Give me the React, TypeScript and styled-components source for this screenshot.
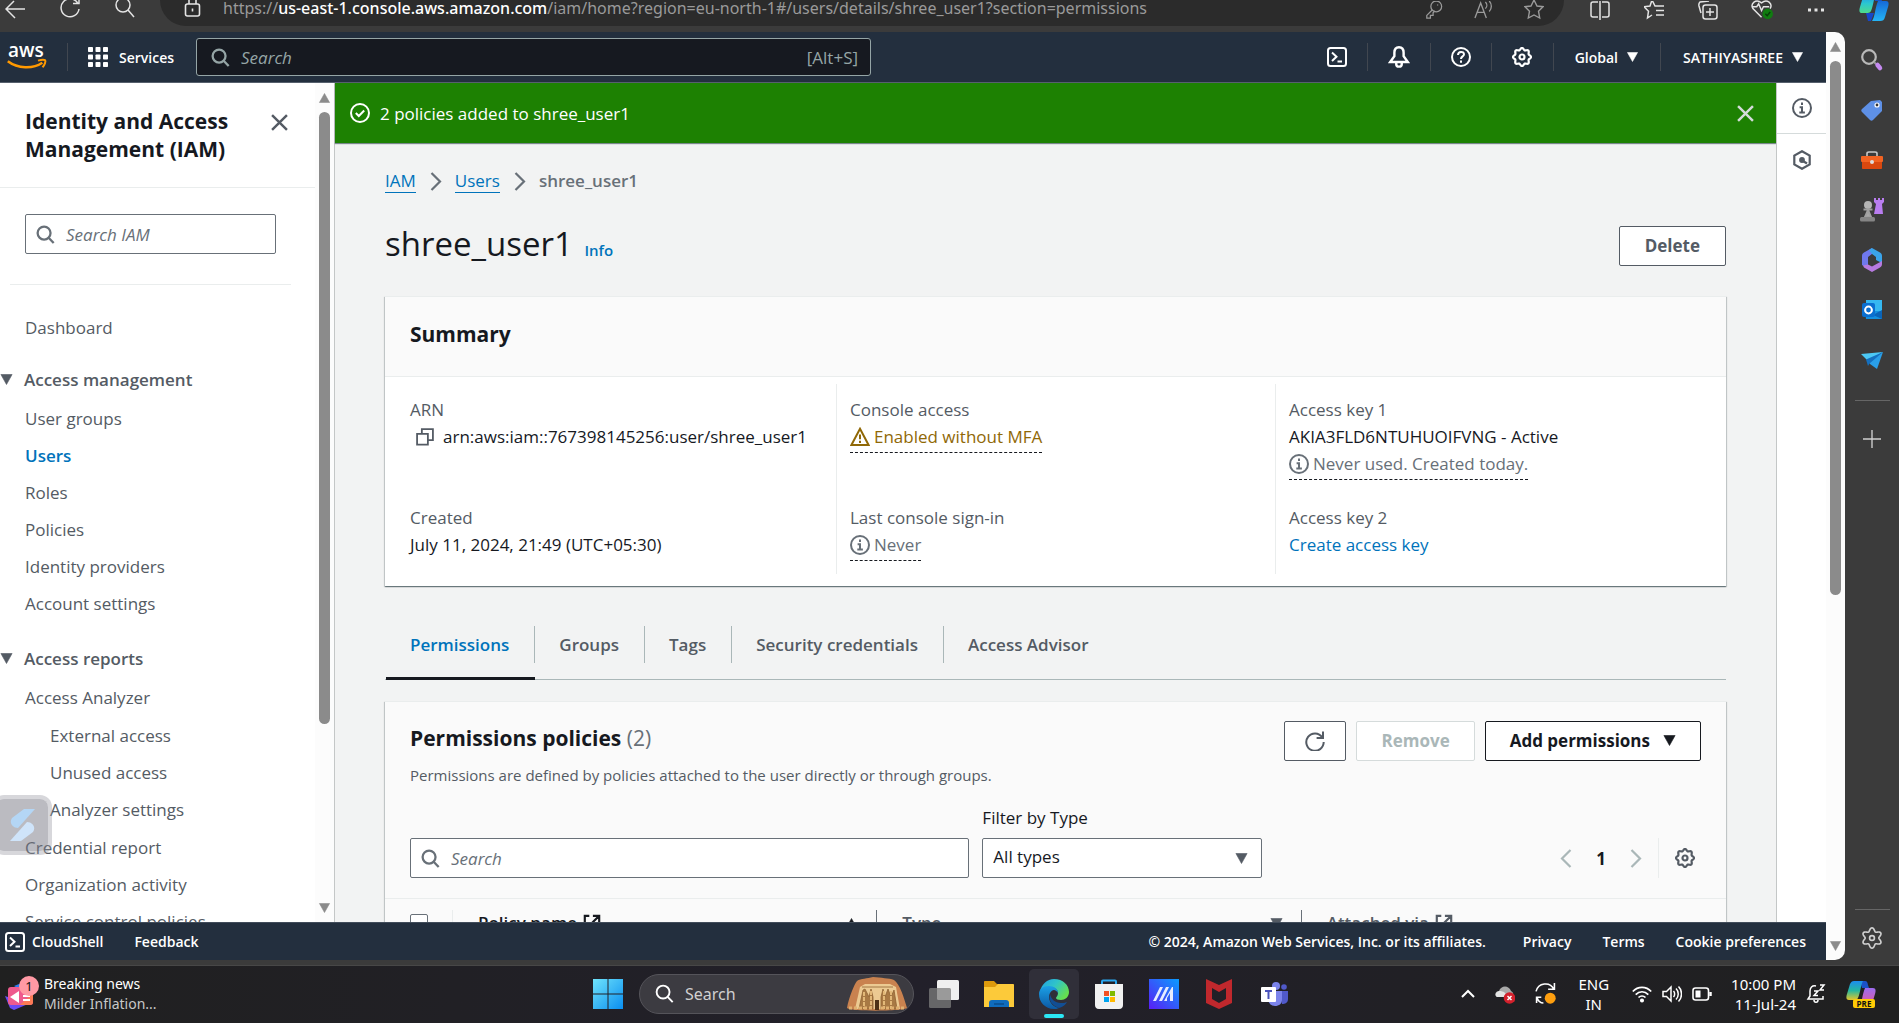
import React from "react";
import styled, { createGlobalStyle } from "styled-components";

const sans = '"Open Sans", "Noto Sans", sans-serif';
const system = '"Noto Sans", "Open Sans", sans-serif';

const GlobalStyle = createGlobalStyle`
  *, *::before, *::after { box-sizing: border-box; }
  html, body { margin: 0; padding: 0; }
  body { overflow: hidden; font-family: ${sans}; font-size: 17px; color: #16191f; }
  button, input, select { font: inherit; color: inherit; margin: 0; }
  button { background: none; border: 0; padding: 0; cursor: pointer; }
  a { color: inherit; text-decoration: none; }
  ul, ol { list-style: none; margin: 0; padding: 0; }
  h1, h2, p, dl, dd, dt { margin: 0; }
  svg { display: block; flex: none; }
`;

/* ---------- shell ---------- */

const Desktop = styled.div`
  display: flex;
  flex-direction: column;
  height: 100vh;
  background: #3b3b3b;
`;

const BrowserBar = styled.header`
  display: flex;
  align-items: flex-start;
  height: 32px;
  overflow: hidden;
  color: #e4e4e4;
  font-family: ${system};
`;

const BrowserButtons = styled.div`
  display: flex;
  gap: 35px;
  width: 160px;
  padding: 0 5px;
`;

const AddressBar = styled.form`
  display: flex;
  align-items: flex-start;
  flex: 1;
  height: 26px;
  padding: 0 20px 0 24px;
  background: #2b2b2b;
  border-radius: 0 0 26px 26px;
`;

const Url = styled.p`
  flex: 1;
  margin-left: 22px;
  font-size: 16px;
  line-height: 16px;
  height: 24px;
  color: #9a9a9a;
  white-space: nowrap;
  b { font-weight: 500; color: #fff; }
`;

const AddressActions = styled.div`
  display: flex;
  gap: 31px;
  color: #9a9a9a;
`;

const BrowserTools = styled.div`
  display: flex;
  justify-content: space-between;
  width: 335px;
  padding: 0 10px 0 26px;
`;

const IconButton = styled.button<{ $color?: string }>`
  display: flex;
  align-items: center;
  justify-content: center;
  color: ${(p) => p.$color ?? "inherit"};
`;

const Body = styled.div`
  display: flex;
  flex: 1;
  min-height: 0;
`;

const Page = styled.div`
  display: flex;
  flex-direction: column;
  flex: 1;
  min-width: 0;
  margin-bottom: 5px;
  background: #fff;
`;

const Track = styled.div<{ $page?: boolean }>`
  display: flex;
  flex-direction: column;
  align-items: center;
  flex: none;
  width: 19px;
  gap: 9px;
  padding: 10px 0 9px;
  margin-bottom: ${(p) => (p.$page ? 5 : 0)}px;
  border-radius: ${(p) => (p.$page ? "0 10px 10px 0" : "0")};
  background: #fcfcfc;
  color: #8b8b8b;
`;

const Thumb = styled.div<{ $grow: number }>`
  flex: ${(p) => p.$grow};
  width: 11px;
  border-radius: 6px;
  background: #8b8b8b;
`;

const Rest = styled.div<{ $grow: number }>`
  flex: ${(p) => p.$grow};
`;

const EdgeBar = styled.aside`
  display: flex;
  flex-direction: column;
  align-items: center;
  flex: none;
  width: 54px;
  padding: 16px 0;
  color: #d0d0d0;
`;

const EdgeApps = styled.div`
  display: flex;
  flex-direction: column;
  gap: 26px;
`;

const EdgeRule = styled.hr<{ $top: number; $bottom: number }>`
  width: 35px;
  height: 1px;
  border: 0;
  margin: ${(p) => p.$top}px 0 ${(p) => p.$bottom}px;
  background: #666;
`;

/* ---------- console navigation ---------- */

const Nav = styled.nav`
  display: flex;
  align-items: center;
  flex: none;
  height: 51px;
  padding: 0 23px 0 7px;
  background: #232f3e;
  border-bottom: 1px solid #56606d;
  color: #fff;
  font-size: 14px;
  font-weight: 600;
`;

const NavRule = styled.span<{ $space: number }>`
  width: 1px;
  height: 28px;
  margin: 0 ${(p) => p.$space}px;
  background: #414750;
`;

const ServicesButton = styled.button`
  display: flex;
  align-items: center;
  gap: 11px;
`;

const NavSearch = styled.label`
  display: flex;
  align-items: center;
  width: 675px;
  height: 38px;
  margin-left: 22px;
  padding: 0 12px 0 14px;
  background: #161920;
  border: 1px solid #95a5a6;
  border-radius: 3px;
  color: #95a5a6;
  font-size: 17px;
  font-weight: 400;
  input {
    flex: 1;
    min-width: 0;
    margin-left: 11px;
    padding: 0;
    border: 0;
    outline: 0;
    background: none;
    color: #fff;
  }
  input::placeholder { color: #95a5a6; font-style: italic; opacity: 1; }
`;

const NavEnd = styled.div`
  display: flex;
  align-items: center;
  margin-left: auto;
`;

const MenuButton = styled.button`
  display: flex;
  align-items: center;
  gap: 9px;
`;

/* ---------- side navigation ---------- */

const Middle = styled.div`
  display: flex;
  flex: 1;
  min-height: 0;
  overflow: hidden;
`;

const SidePanel = styled.aside`
  display: flex;
  flex: none;
  width: 335px;
  border-right: 1px solid #c4c7c7;
  background: #fff;
`;

const SideContent = styled.div`
  position: relative;
  flex: 1;
  min-width: 0;
  overflow: hidden;
  color: #545b64;
`;

const SideHeader = styled.div`
  display: flex;
  align-items: flex-start;
  justify-content: space-between;
  padding: 24px 27px 24px 25px;
  border-bottom: 1px solid #eaeded;
  h2 {
    width: 220px;
    font-size: 21px;
    line-height: 28px;
    font-weight: 700;
    color: #16191f;
  }
  button { height: 30px; }
`;

const Field = styled.label`
  display: flex;
  align-items: center;
  flex: 1;
  min-width: 0;
  height: 40px;
  padding: 0 10px;
  background: #fff;
  border: 1px solid #687078;
  border-radius: 2px;
  color: #687078;
  input {
    flex: 1;
    min-width: 0;
    margin-left: 11px;
    padding: 0;
    border: 0;
    outline: 0;
    background: none;
  }
  input::placeholder { color: #687078; font-style: italic; opacity: 1; }
`;

const SideSearch = styled.div`
  display: flex;
  padding: 26px 39px 30px 25px;
`;

const SideRule = styled.hr`
  height: 1px;
  margin: 0 24px 30px 10px;
  border: 0;
  background: #eaeded;
`;

const SideList = styled.ul`
  display: flex;
  flex-direction: column;
  gap: 12px;
  padding: 0 25px;
`;

const NestedList = styled(SideList)`
  margin: 1px 0;
  padding: 0 0 0 25px;
`;

const SideLink = styled.a<{ $active?: boolean }>`
  display: block;
  line-height: 25px;
  white-space: nowrap;
  font-weight: ${(p) => (p.$active ? 600 : 400)};
  color: ${(p) => (p.$active ? "#0073bb" : "#545b64")};
`;

const SideSection = styled.button<{ $top: number }>`
  display: flex;
  align-items: center;
  gap: 11px;
  margin: ${(p) => p.$top}px 0 14px;
  line-height: 25px;
  font-weight: 600;
`;

const FloatingBadge = styled.button`
  position: absolute;
  left: -8px;
  bottom: 67px;
  display: flex;
  align-items: center;
  justify-content: flex-end;
  width: 60px;
  height: 60px;
  padding-right: 13px;
  border: 4px solid rgba(150, 150, 160, 0.38);
  border-radius: 12px;
  background: rgba(120, 120, 132, 0.5);
  background-clip: padding-box;
`;

/* ---------- main ---------- */

const Main = styled.main`
  flex: 1;
  min-width: 0;
  background: #f2f3f3;
`;

const Banner = styled.div`
  display: flex;
  align-items: center;
  height: 60px;
  padding: 0 22px 0 15px;
  gap: 10px;
  background: #1d8102;
  color: #fff;
  font-weight: 500;
  box-shadow: 0 1px 1px rgba(0, 28, 36, 0.5);
  button { margin-left: auto; }
`;

const Content = styled.div`
  padding: 26px 50px 0;
`;

const Crumbs = styled.ol`
  display: flex;
  align-items: center;
  gap: 13px;
  line-height: 24px;
  color: #687078;
  li { display: flex; align-items: center; gap: 14px; height: 24px; }
  a { color: #0073bb; line-height: 22px; border-bottom: 1px solid #0073bb; }
  span { font-weight: 600; }
`;

const TitleRow = styled.div`
  display: flex;
  justify-content: space-between;
  margin-top: 33px;
  h1 {
    font-size: 33px;
    line-height: 35px;
    font-weight: 400;
  }
  h1 a {
    margin-left: 3px;
    font-size: 15px;
    line-height: 20px;
    font-weight: 600;
    color: #0073bb;
  }
`;

type Tone = "normal" | "primary" | "disabled";
const toneColor: Record<Tone, string> = { normal: "#545b64", primary: "#16191f", disabled: "#aab7b8" };
const toneBorder: Record<Tone, string> = { normal: "#545b64", primary: "#16191f", disabled: "#d5dbdb" };

const Button = styled.button<{ $tone?: Tone; $pad?: number }>`
  display: flex;
  align-items: center;
  justify-content: center;
  gap: 13px;
  height: 40px;
  padding: 0 ${(p) => p.$pad ?? 24}px 1px;
  border: 1px solid ${(p) => toneBorder[p.$tone ?? "normal"]};
  border-radius: 2px;
  background: #fff;
  color: ${(p) => toneColor[p.$tone ?? "normal"]};
  font-weight: 700;
  white-space: nowrap;
`;

const Card = styled.section<{ $top: number }>`
  margin-top: ${(p) => p.$top}px;
  border-top: 1px solid #eaeded;
  background: #fff;
  box-shadow: 0 1px 1px 0 rgba(0, 28, 36, 0.4), 1px 1px 1px 0 rgba(0, 28, 36, 0.15),
    -1px 1px 1px 0 rgba(0, 28, 36, 0.15);
`;

const CardHeading = styled.h2`
  font-size: 21px;
  line-height: 34px;
  font-weight: 700;
  span { font-weight: 400; color: #687078; }
`;

const SummaryHeader = styled.div`
  padding: 20px 25px 25px;
  background: #fafafa;
  border-bottom: 1px solid #eaeded;
`;

const SummaryGrid = styled.div`
  display: grid;
  grid-template-columns: repeat(3, 1fr);
  padding: 7px 12px 12px;
`;

const SummaryColumn = styled.dl`
  padding: 12px 12px 16px 13px;
  border-left: 1px solid #eaeded;
  &:first-child { border-left-color: transparent; padding-left: 12px; }
  div { display: grid; grid-auto-rows: 27px; line-height: 27px; white-space: nowrap; }
  div:first-child { min-height: 81px; margin-bottom: 27px; }
  dt { color: #545b64; }
`;

const ArnValue = styled.dd`
  display: flex;
  align-items: center;
  gap: 9px;
  padding-left: 6px;
`;

const StatusText = styled.span<{ $color: string }>`
  display: inline-flex;
  align-items: center;
  gap: 4px;
  height: 30px;
  padding-bottom: 2px;
  color: ${(p) => p.$color};
  border-bottom: 1px dashed #16191f;
`;

const TextLink = styled.a`
  color: #0073bb;
`;

const Tabs = styled.div`
  display: flex;
  padding: 40px 0 0 1px;
  border-bottom: 1px solid #aab7b8;
`;

const Tab = styled.button<{ $active?: boolean }>`
  margin-bottom: -1px;
  padding-bottom: 14px;
  border-bottom: 3px solid ${(p) => (p.$active ? "#16191f" : "transparent")};
  font-weight: 600;
  color: ${(p) => (p.$active ? "#0073bb" : "#545b64")};
  span { display: block; padding: 0 25px 0 24px; line-height: 37px; border-right: 1px solid #aab7b8; }
  &:last-child span { border-right-color: transparent; }
`;

const PolicyHeader = styled.div`
  display: flex;
  justify-content: space-between;
  padding: 19px 25px 0;
  background: #fafafa;
  p { margin-top: 9px; font-size: 15px; line-height: 22px; color: #545b64; }
`;

const ButtonRow = styled.div`
  display: flex;
  align-items: flex-start;
  gap: 10px;
`;

const FilterBar = styled.div`
  display: flex;
  align-items: flex-end;
  justify-content: space-between;
  padding: 20px 25px;
  background: #fafafa;
  border-bottom: 1px solid #eaeded;
`;

const Filters = styled.div`
  display: flex;
  align-items: flex-end;
  gap: 13px;
  width: 66%;
`;

const FilterSearch = styled.div`
  display: flex;
  flex: 2;
`;

const FilterSelect = styled.div`
  flex: 1;
  label { display: block; margin-bottom: 8px; line-height: 24px; }
`;

const SelectBox = styled.div`
  display: grid;
  align-items: center;
  > * { grid-area: 1 / 1; }
  select {
    appearance: none;
    width: 100%;
    height: 40px;
    padding: 0 10px 3px;
    border: 1px solid #687078;
    border-radius: 2px;
    background: #fff;
  }
  svg { justify-self: end; margin-right: 14px; color: #545b64; pointer-events: none; }
`;

const Pager = styled.div`
  display: flex;
  align-items: center;
  height: 40px;
  color: #aab7b8;
  button { padding: 0 10px; }
  button:last-child { padding-right: 6px; }
  b { width: 38px; text-align: center; color: #16191f; font-weight: 700; }
`;

const PagerRule = styled.span`
  width: 1px;
  height: 40px;
  margin: 0 6px;
  background: #eaeded;
`;

const PolicyTable = styled.table`
  width: 100%;
  border-collapse: collapse;
  table-layout: fixed;
  background: #fafafa;
  color: #545b64;
  th { padding: 11px 0; text-align: left; font-weight: 600; }
  th:first-child { width: 68px; }
`;

const HeaderCell = styled.div<{ $light?: boolean; $dark?: boolean; $last?: boolean }>`
  display: flex;
  align-items: center;
  gap: 6px;
  height: 26px;
  padding: 0 18px 0 25px;
  line-height: 24px;
  color: ${(p) => (p.$dark ? "#16191f" : "#545b64")};
  border-right: 1px solid ${(p) => (p.$last ? "transparent" : p.$light ? "#eaeded" : "#687078")};
  svg:last-child:not(:only-child) { margin-left: ${(p) => (p.$last ? "0" : "auto")}; }
  input {
    appearance: none;
    width: 18px;
    height: 18px;
    margin: 0;
    border: 1px solid #687078;
    border-radius: 2px;
    background: #fff;
  }
`;

const ToolPanel = styled.aside`
  display: flex;
  flex-direction: column;
  flex: none;
  width: 50px;
  border-left: 1px solid #c4c7c7;
  background: #fff;
  color: #545b64;
  button { height: 51px; }
  button:first-child { border-bottom: 1px solid #d5dbdb; }
`;

const Footer = styled.footer`
  display: flex;
  align-items: center;
  flex: none;
  height: 38px;
  padding: 0 20px 0 5px;
  background: #232f3e;
  border-top: 1px solid #414c5a;
  color: #fff;
  font-size: 14px;
  font-weight: 600;
  gap: 31px;
  white-space: nowrap;
  small { margin-left: auto; margin-right: 6px; font-size: 14px; }
  button { display: flex; align-items: center; gap: 7px; }
`;

/* ---------- taskbar ---------- */

const Taskbar = styled.div`
  display: flex;
  align-items: center;
  flex: none;
  height: 58px;
  padding-bottom: 2px;
  border-top: 1px solid #474747;
  background: linear-gradient(90deg, #202020, #22202a 48%, #202020);
  color: #fff;
  font-family: ${system};
  font-size: 15px;
`;

const News = styled.button`
  display: flex;
  align-items: center;
  gap: 4px;
  width: 593px;
  padding-left: 4px;
  text-align: left;
  font-size: 14px;
  line-height: 20px;
  small { display: block; font-size: 14px; color: #c8c8c8; }
`;

const TaskApps = styled.div`
  display: flex;
  align-items: center;
`;

const TaskSearch = styled.label`
  display: flex;
  align-items: center;
  width: 275px;
  height: 40px;
  margin: 0 2px 0 16px;
  padding: 0 6px 0 15px;
  border: 1px solid #55545a;
  border-radius: 20px;
  background: #3c3b41;
  input {
    flex: 1;
    min-width: 0;
    margin-left: 11px;
    padding: 0;
    border: 0;
    outline: 0;
    background: none;
    font-size: 16px;
  }
  input::placeholder { color: #d0d0d0; opacity: 1; }
`;

const TaskButton = styled.button<{ $running?: boolean }>`
  display: flex;
  flex-direction: column;
  align-items: center;
  justify-content: center;
  width: 50px;
  height: 50px;
  margin: 0 2px 0 3px;
  border-radius: 5px;
  background: ${(p) => (p.$running ? "#302f39" : "transparent")};
`;

const RunningMark = styled.span`
  width: 20px;
  height: 4px;
  margin: 5px 0 -9px;
  border-radius: 2px;
  background: #2be7f5;
`;

const Tray = styled.div`
  display: flex;
  align-items: center;
  margin-left: auto;
  padding-right: 23px;
  line-height: 20px;
`;

const TrayText = styled.div<{ $align: "center" | "right"; $before: number; $after: number }>`
  margin: 0 ${(p) => p.$after}px 0 ${(p) => p.$before}px;
  text-align: ${(p) => p.$align};
  white-space: nowrap;
  span { display: block; }
`;

const TrayIcons = styled.div<{ $gap: number }>`
  display: flex;
  align-items: center;
  gap: ${(p) => p.$gap}px;
`;

/* ---------- icons ---------- */

type StrokeProps = { size?: number; w?: number; box?: number; children: React.ReactNode };
const Stroke = ({ size = 20, w = 2, box = 20, children }: StrokeProps) => (
  <svg width={size} height={size} viewBox={`0 0 ${box} ${box}`} fill="none" stroke="currentColor" strokeWidth={w} aria-hidden="true">
    {children}
  </svg>
);

const SearchIcon = ({ size = 19, w = 2.4 }: { size?: number; w?: number }) => (
  <Stroke size={size} w={w}>
    <circle cx="8.5" cy="8.5" r="6.8" />
    <path d="M13.3 13.5 18.6 19" />
  </Stroke>
);

const Caret = ({ w = 12, h = 11, up = false }: { w?: number; h?: number; up?: boolean }) => (
  <svg width={w} height={h} viewBox="0 0 12 11" fill="currentColor" aria-hidden="true">
    <path d={up ? "M6 .5 11.6 10.5H.4z" : "M.4.5h11.2L6 10.5z"} stroke="currentColor" strokeLinejoin="round" strokeWidth=".6" />
  </svg>
);

const CloseIcon = () => (
  <Stroke size={17} w={2.3} box={16}><path d="m1 1 14 14M15 1 1 15" /></Stroke>
);

const cog = (lobes: number, outer: number, depth: number) => {
  const pts: string[] = [];
  for (let i = 0; i < 96; i++) {
    const a = (i / 96) * Math.PI * 2;
    const r = outer - depth * (0.5 - 0.5 * Math.cos(a * lobes));
    pts.push(`${(10 + r * Math.sin(a)).toFixed(2)} ${(10 - r * Math.cos(a)).toFixed(2)}`);
  }
  return `M${pts.join("L")}z`;
};

const GearIcon = () => (
  <Stroke w={2.2}>
    <path d={cog(8, 9, 1.8)} />
    <circle cx="10" cy="10" r="2.5" />
  </Stroke>
);

const ShellIcon = ({ size = 20 }: { size?: number }) => (
  <Stroke size={size}>
    <rect x="1" y="1" width="18" height="18" rx="2.5" />
    <path d="m5 5.5 4.5 4.2L5 14M10.5 14.4H15" />
  </Stroke>
);

const InfoIcon = ({ size = 20 }: { size?: number }) => (
  <Stroke size={size}>
    <circle cx="10" cy="10" r="9" />
    <path d="M10 4.5v2.6M7.6 9.3H10v5M7.3 14.4h5.6" />
  </Stroke>
);

const WarningIcon = () => (
  <Stroke><path d="M10 1.8 18.6 18H1.4zM10 7.5v4.8M10 13.8v2.2" /></Stroke>
);

const ExternalIcon = () => (
  <Stroke size={18} w={2.4}><path d="M7 2H2v16h16v-5M11 2h7v7M18 2 9 11" /></Stroke>
);

const Chevron = ({ left = false, w = 2.2 }: { left?: boolean; w?: number }) => (
  <svg width="12" height="19" viewBox="0 0 12 19" fill="none" stroke="currentColor" strokeWidth={w} aria-hidden="true">
    <path d={left ? "M10.5 1 2 9.5l8.5 8.5" : "M1.5 1 10 9.5 1.5 18"} />
  </svg>
);

const RefreshIcon = () => (
  <Stroke><path d="M17.2 6.2A8.7 8.7 0 1 0 18.7 11M18 .6v6.4h-6.4" /></Stroke>
);

const AwsLogo = () => (
  <svg width="40" height="28" viewBox="0 0 40 28" aria-label="aws" role="img">
    <text x="1" y="14" fontSize="19" fontWeight="600" fill="#fff" fontFamily={sans}>aws</text>
    <path d="M.8 18.2c10 7.5 25 8 34.5 1.5" fill="none" stroke="#ff9900" strokeWidth="2.6" />
    <path d="M31 17.6c3-.9 6.3-1 7.2-.3.7 1-.5 4.7-2.7 7" fill="none" stroke="#ff9900" strokeWidth="2" />
  </svg>
);

const GridIcon = () => (
  <svg width="20" height="20" viewBox="0 0 20 20" fill="currentColor" aria-hidden="true">
    {[0, 7.5, 15].map((y) => [0, 7.5, 15].map((x) => <rect key={`${x}-${y}`} x={x} y={y} width="5" height="5" rx=".8" />))}
  </svg>
);

const CopilotIcon = ({ pre = false }: { pre?: boolean }) => (
  <svg width="30" height="30" viewBox="0 0 30 30" aria-hidden="true">
    <defs>
      <linearGradient id={pre ? "cpa" : "cpb"} x1="0" y1="0" x2="0" y2="1">
        <stop offset="0" stopColor="#1c8cf0" />
        <stop offset=".5" stopColor={pre ? "#25b7a0" : "#2bc7d0"} />
        <stop offset="1" stopColor={pre ? "#e6c62a" : "#4fdb8a"} />
      </linearGradient>
      <linearGradient id={pre ? "cpc" : "cpd"} x1="0" y1="0" x2="0" y2="1">
        <stop offset="0" stopColor={pre ? "#9b6cf0" : "#1569d8"} />
        <stop offset="1" stopColor={pre ? "#f0568c" : "#25b5f5"} />
      </linearGradient>
    </defs>
    <path d="M14 2h5c2 0 2.5 1.5 3 4l1 3h-7z" fill="#1a52c8" />
    <path d="M8 2h9c-2 3-3 13-5 17-1 2-3 2-5 2H3c-3 0-3-3-2-6L4 5c1-2 2-3 4-3z" fill={`url(#${pre ? "cpa" : "cpb"})`} />
    <path d="M19 9h8c3 0 3 3 2 6l-3 10c-1 3-2 4-5 4h-8c3-4 3-13 6-20z" fill={`url(#${pre ? "cpc" : "cpd"})`} />
    {pre ? (
      <>
        <rect x="7" y="20" width="22" height="9" rx="2" fill="#ffcb05" />
        <text x="18" y="27.5" fontSize="8" fontWeight="700" textAnchor="middle" fill="#111" fontFamily={sans}>PRE</text>
      </>
    ) : (
      <path d="M7 21h8l-3 8H9z" fill="#1747c8" />
    )}
  </svg>
);

const edgeApps: [string, React.ReactNode][] = [
  ["Search", <svg width="24" height="24" viewBox="0 0 24 24" key="s"><circle cx="9" cy="9" r="6.8" fill="none" stroke="#b9b9b9" strokeWidth="2.2" /><path d="m14 14 2 2" stroke="#999" strokeWidth="2" /><path d="m17.5 17 2.5 3" stroke="#c58af0" strokeWidth="4.5" strokeLinecap="round" /></svg>],
  ["Shopping", <svg width="24" height="24" viewBox="0 0 24 24" key="t"><path d="m2 11 9-8 9-1 2 2v9l-9 9c-1 1-2 1-3 0l-8-8c-1-1-1-2 0-3z" fill="#5e90e6" /><circle cx="17" cy="7" r="2" fill="#333" stroke="#fff" strokeWidth="1.2" /></svg>],
  ["Tools", <svg width="24" height="24" viewBox="0 0 24 24" key="b"><path d="M7 8V5.5C7 4.5 8 4 9 4h6c1 0 2 .5 2 1.5V8" fill="none" stroke="#c8c8c8" strokeWidth="1.6" /><rect x="1" y="8" width="22" height="6" rx="1" fill="#f26322" /><path d="M2 14h20v6c0 .6-.5 1-1 1H3c-.6 0-1-.4-1-1z" fill="#d9480f" /><circle cx="12" cy="14" r="2" fill="#ddd" /></svg>],
  ["Games", <svg width="24" height="24" viewBox="0 0 24 24" key="g"><path d="M14 0h2v2h2V0h2v2h2V0h2v4l-2 2 1 10h-9l2-10-2-2z" fill="#b97df0" /><circle cx="8" cy="7" r="4" fill="#b4b4b4" /><path d="M3.5 11.5h9M8 12l3 7H5z" fill="#a8a8a8" stroke="#a0a0a0" strokeWidth="2" /><rect x="0" y="19" width="15" height="4.5" rx="1.5" fill="#858585" /></svg>],
  ["Microsoft 365", <svg width="24" height="24" viewBox="0 0 24 24" key="m"><path d="M12 0 4 4.5C2.5 5.5 2 6.5 2 8v9l6 4V9l4-3z" fill="#6f78ee" /><path d="m12 0 8 4.5c1.5 1 2 2 2 3.5v7l-6-3V9l-4-3-3-4z" fill="#3aa4ea" /><path d="M22 13v3c0 1.500-.5 2.500-2 3.500L12 24l-8-4.500-1-2 5-1 4 2z" fill="#b77ae0" /><path d="M12 6.500 9 9v6l3 2 3-2V9z" fill="#3b3b3b" /></svg>],
  ["Outlook", <svg width="24" height="24" viewBox="0 0 24 24" key="o"><rect x="6" y="2" width="16" height="13" fill="#35b8f1" /><path d="M5 13h17v8H6z" fill="#1490df" /><path d="m22 12-9 5 9 4z" fill="#0a64b8" /><rect x="2" y="5" width="13" height="14" rx="2" fill="#0a6fd0" /><circle cx="8.5" cy="12" r="3.4" fill="none" stroke="#fff" strokeWidth="2" /></svg>],
  ["Drop", <svg width="24" height="24" viewBox="0 0 24 24" key="d"><path d="m1 6 22-2-15 9z" fill="#4cc8f5" /><path d="m8 13 15-9-6 17-7-5z" fill="#2a9fe8" /><path d="M6 11.5 23 4 9.5 15.5 8 18z" fill="#1470c0" /></svg>],
];

const Win11 = () => (
  <svg width="30" height="30" viewBox="0 0 30 30" aria-hidden="true">
    <defs><linearGradient id="win" x1="0" y1="0" x2="1" y2="1"><stop offset="0" stopColor="#6fe3fb" /><stop offset="1" stopColor="#0a8ef0" /></linearGradient></defs>
    <path d="M0 0h14.5v14.5H0zM15.5 0H30v14.5H15.5zM0 15.5h14.5V30H0zM15.5 15.5H30V30H15.5z" fill="url(#win)" />
  </svg>
);

const TempleArt = () => (
  <svg width="60" height="34" viewBox="0 0 60 34" aria-hidden="true">
    <path d="M0 31C2 20 7 8 10 4c4-3 10-2 16-4 8 1 16 1 21 3 6 4 10 18 13 28-2 3-54 4-60 0z" fill="#c9824f" />
    <path d="m8 32 5-22 5-3h25l6 3 4 22z" fill="#ecca92" />
    <path d="M15 10h31M12 32l4-19 2-1 4 8 2-8 2 8v12zM34 32V20l2-8 2 8 3-8 3 8 3-7 3 19z" fill="#a87944" stroke="#8f6232" strokeWidth=".8" />
    <path d="M17 15v17M24 14v18M37 14v18M44 14v18" stroke="#e2b878" strokeWidth="2" strokeDasharray="4 1" />
    <rect x="28" y="23" width="4" height="10" fill="#4e3216" />
    <path d="M2 31h24M34 31h24" stroke="#e0b070" strokeWidth="3" strokeDasharray="3 2" />
  </svg>
);

const taskApps: { name: string; running?: boolean; icon: React.ReactNode }[] = [
  { name: "Task view", icon: <svg width="30" height="30" viewBox="0 0 30 30"><rect x="8" y="1" width="22" height="20" rx="1.5" fill="#f0f0f0" /><rect x="0" y="9" width="22" height="20" rx="1.5" fill="#7d7d7d" fillOpacity=".75" /></svg> },
  { name: "File Explorer", icon: <svg width="30" height="30" viewBox="0 0 30 30"><path d="M0 3c0-1 .5-1 1-1h9l3 3h4v6H0z" fill="#dd9a0c" /><path d="M0 8h11l3-3h15c.6 0 1 .4 1 1v22H0z" fill="#fcca3a" /><path d="M5 28v-4c0-2 1-3 3-3h14c2 0 3 1 3 3v4z" fill="#0f6cbd" /><path d="M10 25h10" stroke="#0a4d8c" strokeWidth="1.5" /></svg> },
  {
    name: "Edge", running: true, icon: (
      <svg width="30" height="30" viewBox="0 0 30 30">
        <defs>
          <linearGradient id="eg1" x1="0" y1="0" x2="1" y2=".6"><stop offset="0" stopColor="#1f9ee8" /><stop offset=".5" stopColor="#30c4c8" /><stop offset="1" stopColor="#66e04e" /></linearGradient>
          <linearGradient id="eg2" x1="0" y1="0" x2="0" y2="1"><stop offset="0" stopColor="#1ba0e6" /><stop offset="1" stopColor="#0c59a4" /></linearGradient>
        </defs>
        <path d="M1 12C3 5 8 0 15 0c9 0 15 6 15 13 0 5-4 8-8 8-3 0-5-1-5-2s2-2 2-5c0-3-3-6-8-6S2 10 1 12z" fill="url(#eg1)" />
        <path d="M0 15c0-5 4-8 10-8 5 0 9 3 9 7-1-2-3-3-4-3-3 0-5 4-5 7 0 6 5 10 10 11-2 1-3 1-5 1C6 30 0 23 0 15z" fill="url(#eg2)" />
        <path d="M11 15c-2 7 3 12 9 14 4-1 7-4 8-6-2 1-4 1-6 1-6 0-10-4-11-9z" fill="#124e94" />
      </svg>
    ),
  },
  { name: "Microsoft Store", icon: <svg width="30" height="30" viewBox="0 0 30 30"><path d="M8 7V2.5C8 2 8.5 1.5 9 1.5h12c.6 0 1 .5 1 1V7" fill="none" stroke="#2aa7f0" strokeWidth="2" /><path d="M1 5h28v21c0 2-1 4-4 4H5c-3 0-4-2-4-4z" fill="#f1f1f1" /><path fill="#f25022" d="M10 12h5v5h-5z" /><path fill="#7fba00" d="M16 12h5v5h-5z" /><path fill="#00a4ef" d="M10 18h5v5h-5z" /><path fill="#ffb900" d="M16 18h5v5h-5z" /></svg> },
  { name: "MyASUS", icon: <svg width="30" height="30" viewBox="0 0 30 30"><defs><linearGradient id="asus" x1="0" y1="1" x2="1" y2="0"><stop offset="0" stopColor="#5a1df5" /><stop offset="1" stopColor="#0a9cff" /></linearGradient></defs><path d="M0 0h30v30H0z" fill="url(#asus)" /><path d="m4 22 7-14h3L7 22zM10 22l7-14h3l-7 14zM15 22l8-14h1v14h-3v-8l-3 5v3z" fill="#e6ecff" /></svg> },
  { name: "McAfee", icon: <svg width="30" height="30" viewBox="0 0 30 30"><path d="m2 0 13 6 13-6v24l-13 6-13-6zm6 9v11l7 4 7-4V9l-7 4z" fill="#c0282d" fillRule="evenodd" /></svg> },
  { name: "Teams", icon: <svg width="30" height="30" viewBox="0 0 30 30"><circle cx="17" cy="7" r="4" fill="#7b83eb" /><circle cx="25" cy="8" r="2.8" fill="#5059c9" /><path d="M20 12h9v8c0 4-3 5-6 5z" fill="#5059c9" /><path d="M9 12h14v8c0 5-3 7-7 7s-7-3-7-7z" fill="#7b83eb" /><rect x="2" y="8" width="15" height="15" rx="1" fill="#fff" /><path d="M6 12h7M9.5 12v8" stroke="#4b53bc" strokeWidth="2" /></svg> },
];

/* ---------- data ---------- */

const managementLinks = ["User groups", "Users", "Roles", "Policies", "Identity providers", "Account settings"];
const analyzerLinks = ["External access", "Unused access", "Analyzer settings"];
const reportLinks = ["Credential report", "Organization activity", "Service control policies"];
const tabs = ["Permissions", "Groups", "Tags", "Security credentials", "Access Advisor"];

export default function App() {
  return (
    <>
      <GlobalStyle />
      <Desktop>
        <BrowserBar>
          <BrowserButtons>
            <IconButton aria-label="Back"><Stroke size={20} w={1.5}><path d="M20 9H1M9 1 1 9l9 9" /></Stroke></IconButton>
            <IconButton aria-label="Reload"><Stroke size={20} w={1.5}><path d="M18 3.5A9 9 0 1 0 19 9M19 0v3.5h-6" /></Stroke></IconButton>
            <IconButton aria-label="Search the web"><Stroke size={20} w={1.5}><circle cx="8" cy="5" r="7" /><path d="m13 10 6 7" /></Stroke></IconButton>
          </BrowserButtons>
          <AddressBar>
            <IconButton type="button" aria-label="Site information"><Stroke size={17} w={1.6} box={17}><rect x="1.5" y="4" width="14" height="12" rx="2" /><path d="M5 4V0M12 4V0M8.5 8.5v3" /></Stroke></IconButton>
            <Url>https://<b>us-east-1.console.aws.amazon.com</b>/iam/home?region=eu-north-1#/users/details/shree_user1?section=permissions</Url>
            <AddressActions>
              <IconButton type="button" aria-label="Passwords"><Stroke size={18} w={1.4}><circle cx="12.5" cy="6" r="6" /><path d="M8 10 2 16v3h4v-3h3v-3l2-2M14 4v1" /></Stroke></IconButton>
              <IconButton type="button" aria-label="Read aloud"><Stroke size={19} w={1.4}><path d="m1 18 6-16 6 16M3 12h8M12 1c2 2 2 5 0 7M16 0c3 3 3 8 0 11" /></Stroke></IconButton>
              <IconButton type="button" aria-label="Favorite"><Stroke size={20} w={1.4}><path d="m10 0 3 6 6 .7-4.5 4.5 1.2 6.8L10 15l-5.7 3 1.2-6.8L1 6.7 7 6z" /></Stroke></IconButton>
            </AddressActions>
          </AddressBar>
          <BrowserTools>
            <IconButton aria-label="Split screen"><Stroke size={20} w={1.5}><path d="M8 1H3C1.5 1 1 2 1 3v11c0 1 .5 2 2 2h5M12 1h5c1.5 0 2 1 2 2v11c0 1-.5 2-2 2h-5M10 0v19" /></Stroke></IconButton>
            <IconButton aria-label="Favorites"><Stroke size={20} w={1.5}><path d="M13 5 11 5 8-1 6 5l-6 .7 4.5 4.5L3.5 17 8 14M12 5h8M12 9.5h8M12 14h8" /></Stroke></IconButton>
            <IconButton aria-label="Collections"><Stroke size={20} w={1.5}><rect x="5" y="4" width="14" height="14" rx="2.5" /><path d="M12 7v8M8 11h8M3 12 1 5C.5 3 1 2 2 1l9-1" /></Stroke></IconButton>
            <IconButton aria-label="Browser essentials"><Stroke size={22} w={1.5} box={23}><path d="M11 18 2 9C-1 4 5-2 11 3c6-5 12 1 9 6M1 7h5l2-3 3 7 2-4h6" /><circle cx="17.5" cy="14.5" r="5.5" fill="#107c10" stroke="none" /><path d="m15 14.5 2 2 3-4" stroke="#0a3d0a" /></Stroke></IconButton>
            <IconButton aria-label="More"><Stroke size={18} box={18} w={3}><path d="M1 8h3M7.5 8h3M14 8h3" /></Stroke></IconButton>
            <IconButton aria-label="Copilot"><svg width="30" height="22" viewBox="0 8 30 22" aria-hidden="true"><CopilotIcon /></svg></IconButton>
          </BrowserTools>
        </BrowserBar>

        <Body>
          <Page>
            <Nav>
              <AwsLogo />
              <NavRule $space={20} />
              <ServicesButton><GridIcon />Services</ServicesButton>
              <NavSearch>
                <SearchIcon />
                <input type="search" placeholder="Search" aria-label="Search services" />
                [Alt+S]
              </NavSearch>
              <NavEnd>
                <IconButton aria-label="CloudShell"><ShellIcon /></IconButton>
                <NavRule $space={20} />
                <IconButton aria-label="Notifications"><Stroke size={22} w={2.2}><path d="M10 1.2c-3 0-4.2 2.5-4.2 5v3L2 14.5h16l-3.800-5.300v-3c0-2.500-1.200-5-4.200-5zM7.500 15v1.500c0 3 5 3 5 0V15" /></Stroke></IconButton>
                <NavRule $space={20} />
                <IconButton aria-label="Help"><Stroke><circle cx="10" cy="10" r="9" /><path d="M7 8c0-4 6-4 6-.8C13 9.500 10 9.300 10 12M10 13.500v2.200" /></Stroke></IconButton>
                <NavRule $space={20} />
                <IconButton aria-label="Settings"><GearIcon /></IconButton>
                <NavRule $space={21} />
                <MenuButton>Global<Caret w={11} h={10} /></MenuButton>
                <NavRule $space={22} />
                <MenuButton>SATHIYASHREE<Caret w={11} h={10} /></MenuButton>
              </NavEnd>
            </Nav>

            <Middle>
              <SidePanel>
                <SideContent>
                  <SideHeader>
                    <h2>Identity and Access Management (IAM)</h2>
                    <IconButton aria-label="Close navigation"><CloseIcon /></IconButton>
                  </SideHeader>
                  <SideSearch>
                    <Field><SearchIcon /><input type="search" placeholder="Search IAM" aria-label="Search IAM" /></Field>
                  </SideSearch>
                  <SideRule />
                  <SideList><li><SideLink href="#">Dashboard</SideLink></li></SideList>
                  <SideSection $top={27}><Caret w={13} h={11} />Access management</SideSection>
                  <SideList>
                    {managementLinks.map((l) => <li key={l}><SideLink href="#" $active={l === "Users"}>{l}</SideLink></li>)}
                  </SideList>
                  <SideSection $top={30}><Caret w={13} h={11} />Access reports</SideSection>
                  <SideList>
                    <li><SideLink href="#">Access Analyzer</SideLink></li>
                    <li>
                      <NestedList>
                        {analyzerLinks.map((l) => <li key={l}><SideLink href="#">{l}</SideLink></li>)}
                      </NestedList>
                    </li>
                    {reportLinks.map((l) => <li key={l}><SideLink href="#">{l}</SideLink></li>)}
                  </SideList>
                  <FloatingBadge aria-label="Assistant">
                    <svg width="25" height="34" viewBox="0 0 25 34" aria-hidden="true">
                      <path d="M14 1h11L8 20c-6 0-9-6-6-10z" fill="#b4d6f5" />
                      <path d="M11 33H0l17-19c6 0 9 6 6 10z" fill="#cfe4fa" />
                    </svg>
                  </FloatingBadge>
                </SideContent>
                <Track>
                  <Caret w={13} h={10} up />
                  <Thumb $grow={612} />
                  <Rest $grow={161} />
                  <Caret w={13} h={10} />
                </Track>
              </SidePanel>

              <Main>
                <Banner role="status">
                  <Stroke><circle cx="10" cy="10" r="9" /><path d="m5.8 10 3 3 5.4-5.5" /></Stroke>
                  2 policies added to shree_user1
                  <IconButton aria-label="Dismiss" $color="#d5dbdb"><CloseIcon /></IconButton>
                </Banner>
                <Content>
                  <Crumbs>
                    <li><a href="#">IAM</a><Chevron /></li>
                    <li><a href="#">Users</a><Chevron /></li>
                    <li><span>shree_user1</span></li>
                  </Crumbs>
                  <TitleRow>
                    <h1>shree_user1 <a href="#">Info</a></h1>
                    <Button $pad={25}>Delete</Button>
                  </TitleRow>

                  <Card $top={30}>
                    <SummaryHeader><CardHeading>Summary</CardHeading></SummaryHeader>
                    <SummaryGrid>
                      <SummaryColumn>
                        <div>
                          <dt>ARN</dt>
                          <ArnValue>
                            <IconButton aria-label="Copy ARN" $color="#545b64"><Stroke size={18}><path d="M1.2 6.5h12v12h-12zM6.5 6V1.2h12.300v12.300H14" /></Stroke></IconButton>
                            arn:aws:iam::767398145256:user/shree_user1
                          </ArnValue>
                        </div>
                        <div>
                          <dt>Created</dt>
                          <dd>July 11, 2024, 21:49 (UTC+05:30)</dd>
                        </div>
                      </SummaryColumn>
                      <SummaryColumn>
                        <div>
                          <dt>Console access</dt>
                          <dd><StatusText $color="#906806"><WarningIcon />Enabled without MFA</StatusText></dd>
                        </div>
                        <div>
                          <dt>Last console sign-in</dt>
                          <dd><StatusText $color="#687078"><InfoIcon />Never</StatusText></dd>
                        </div>
                      </SummaryColumn>
                      <SummaryColumn>
                        <div>
                          <dt>Access key 1</dt>
                          <dd>AKIA3FLD6NTUHUOIFVNG - Active</dd>
                          <dd><StatusText $color="#687078"><InfoIcon />Never used. Created today.</StatusText></dd>
                        </div>
                        <div>
                          <dt>Access key 2</dt>
                          <dd><TextLink href="#">Create access key</TextLink></dd>
                        </div>
                      </SummaryColumn>
                    </SummaryGrid>
                  </Card>

                  <Tabs role="tablist">
                    {tabs.map((t, i) => <Tab key={t} role="tab" aria-selected={i === 0} $active={i === 0}><span>{t}</span></Tab>)}
                  </Tabs>

                  <Card $top={21}>
                    <PolicyHeader>
                      <div>
                        <CardHeading>Permissions policies <span>(2)</span></CardHeading>
                        <p>Permissions are defined by policies attached to the user directly or through groups.</p>
                      </div>
                      <ButtonRow>
                        <Button aria-label="Refresh" $pad={20}><RefreshIcon /></Button>
                        <Button $tone="disabled" disabled>Remove</Button>
                        <Button $tone="primary">Add permissions<Caret w={13} h={11} /></Button>
                      </ButtonRow>
                    </PolicyHeader>
                    <FilterBar>
                      <Filters>
                        <FilterSearch>
                          <Field><SearchIcon /><input type="search" placeholder="Search" aria-label="Search policies" /></Field>
                        </FilterSearch>
                        <FilterSelect>
                          <label htmlFor="type-filter">Filter by Type</label>
                          <SelectBox>
                            <select id="type-filter"><option>All types</option></select>
                            <Caret w={13} h={11} />
                          </SelectBox>
                        </FilterSelect>
                      </Filters>
                      <Pager>
                        <IconButton aria-label="Previous page"><Chevron left /></IconButton>
                        <b>1</b>
                        <IconButton aria-label="Next page"><Chevron /></IconButton>
                        <PagerRule />
                        <IconButton aria-label="Table settings" $color="#545b64"><GearIcon /></IconButton>
                      </Pager>
                    </FilterBar>
                    <PolicyTable>
                      <thead>
                        <tr>
                          <th><HeaderCell $light><input type="checkbox" aria-label="Select all policies" /></HeaderCell></th>
                          <th><HeaderCell $dark>Policy name<ExternalIcon /><Caret w={13} h={11} up /></HeaderCell></th>
                          <th><HeaderCell>Type<span /><Caret w={13} h={11} /></HeaderCell></th>
                          <th><HeaderCell $last>Attached via<ExternalIcon /></HeaderCell></th>
                        </tr>
                      </thead>
                    </PolicyTable>
                  </Card>
                </Content>
              </Main>

              <ToolPanel>
                <IconButton aria-label="Info panel"><InfoIcon /></IconButton>
                <IconButton aria-label="Resources"><Stroke w={2.2}><path d="m10 1.2 7.7 4.4v8.8L10 18.8l-7.7-4.400V5.600z" /><circle cx="10" cy="10" r="1.8" fill="currentColor" /><path d="m11 11 4 2.5" /></Stroke></IconButton>
              </ToolPanel>
            </Middle>

            <Footer>
              <button><ShellIcon />CloudShell</button>
              <button>Feedback</button>
              <small>© 2024, Amazon Web Services, Inc. or its affiliates.</small>
              <a href="#">Privacy</a>
              <a href="#">Terms</a>
              <a href="#">Cookie preferences</a>
            </Footer>
          </Page>
          <Track $page>
            <Caret w={13} h={10} up />
            <Thumb $grow={534} />
            <Rest $grow={328} />
            <Caret w={13} h={10} />
          </Track>
          <EdgeBar>
            <EdgeApps>
              {edgeApps.map(([name, icon]) => <IconButton key={name} aria-label={name}>{icon}</IconButton>)}
            </EdgeApps>
            <EdgeRule $top={28} $bottom={29} />
            <IconButton aria-label="Customize"><Stroke size={18} w={1.5}><path d="M10 0v20M0 10h20" /></Stroke></IconButton>
            <Rest $grow={1} />
            <EdgeRule $top={0} $bottom={17} />
            <IconButton aria-label="Sidebar settings"><Stroke size={22} w={1.5}><path d={cog(6, 9.2, 3)} /><circle cx="10" cy="10" r="2.2" /></Stroke></IconButton>
          </EdgeBar>
        </Body>

        <Taskbar>
          <News>
            <svg width="36" height="36" viewBox="0 0 36 36" aria-hidden="true">
              <path d="m1 20 5 12 4 2 14-6z" fill="#6a4cf5" />
              <path d="M10 10 20 6v10z" fill="#2d7df0" />
              <rect x="4" y="11" width="25" height="18" rx="3" fill="#ee5a8e" />
              <path d="M16 29h10c2 0 3-1 3-3v-9z" fill="#fb7a55" />
              <path d="m6 21 9-6v12z" fill="#fff" /><path d="M19 20h7M19 24h7" stroke="#fff" strokeWidth="2" />
              <circle cx="25" cy="10" r="10" fill="#ff99a4" />
              <text x="25" y="15" fontSize="13" textAnchor="middle" fill="#111">1</text>
            </svg>
            <span>Breaking news<small>Milder Inflation...</small></span>
          </News>
          <TaskApps>
            <IconButton aria-label="Start"><Win11 /></IconButton>
            <TaskSearch>
              <SearchIcon w={2} />
              <input type="search" placeholder="Search" aria-label="Search Windows" />
              <TempleArt />
            </TaskSearch>
            {taskApps.map((a) => (
              <TaskButton key={a.name} aria-label={a.name} $running={a.running}>
                {a.icon}
                {a.running && <RunningMark />}
              </TaskButton>
            ))}
          </TaskApps>
          <Tray>
            <TrayIcons $gap={20}>
              <IconButton aria-label="Hidden icons"><Stroke size={14} box={14}><path d="m1 10 6-6 6 6" /></Stroke></IconButton>
              <IconButton aria-label="OneDrive"><svg width="20" height="20" viewBox="0 0 20 20"><path d="M3 13c-4-1-3-6 1-6 2-6 10-6 12 0 4 2 2 6-1 6z" fill="#a9a9a9" /><path d="M2 13c-3-2-1-5 2-6 5 0 7 2 8 6z" fill="#e4e4e4" /><circle cx="14.5" cy="14" r="5.8" fill="#d3202c" /><path d="m12.5 12 4 4M16.5 12l-4 4" stroke="#fff" strokeWidth="1.5" /></svg></IconButton>
              <IconButton aria-label="Update"><Stroke size={21} w={1.5}><path d="M1 8c2-8 13-10 17-2M18.5 0v6h-6M6 13.5H1.5V19M2 14c1 3 3 5 6 5" /><circle cx="14.5" cy="14.5" r="5.2" fill="#ff9f0f" stroke="none" /></Stroke></IconButton>
            </TrayIcons>
            <TrayText $align="center" $before={22} $after={23}><span>ENG</span><span>IN</span></TrayText>
            <TrayIcons $gap={10}>
              <Stroke size={20} w={1.7}><path d="M.8 7.5c5-5.5 13.4-5.5 18.4 0M3.7 10.6c3.600-3.800 9-3.800 12.600 0M6.500 13.500c2-2 5-2 7 0" /><circle cx="10" cy="16.5" r="1.2" fill="currentColor" /></Stroke>
              <Stroke size={20} w={1.5}><path d="M1 7.5h3.5L9 3v14l-4.5-4.500H1zM11.500 7c1.500 1.500 1.500 4.500 0 6M14 4.500c3 3 3 8 0 11M16.500 2.500c4 4 4 11 0 15" /></Stroke>
              <Stroke size={20} w={1.6}><rect x="1" y="4" width="15.5" height="12" rx="2.5" /><path d="M18.5 8v4" strokeWidth="2.5" /><rect x="3.5" y="6.5" width="5" height="7" fill="currentColor" stroke="none" /></Stroke>
            </TrayIcons>
            <TrayText $align="right" $before={19} $after={10}><span>10:00 PM</span><span>11-Jul-24</span></TrayText>
            <TrayIcons $gap={20}>
              <Stroke size={20} w={1.5}><path d="M10 2C6 1 4 4 4 7v5l-2 3h15v-3M8 16c0 3 4 3 4 0M8 7h4l-4 4.5h4M14 1h4l-4 5h4" /></Stroke>
              <CopilotIcon pre />
            </TrayIcons>
          </Tray>
        </Taskbar>
      </Desktop>
    </>
  );
}
